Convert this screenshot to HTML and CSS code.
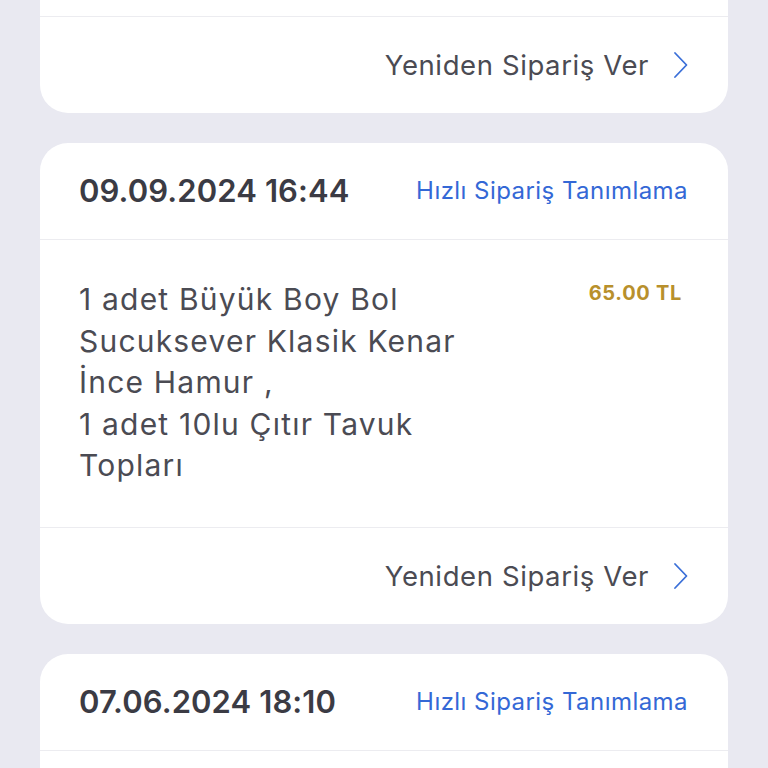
FILE: index.html
```html
<!DOCTYPE html>
<html lang="tr">
<head>
<meta charset="utf-8">
<link rel="stylesheet" href="styles.css">
</head>
<body>
<div class="list">
  <div class="card card-cut">
    <div class="tail"></div>
    <div class="footer">
      <span class="again">Yeniden Sipariş Ver</span>
      <svg class="chev" viewBox="0 0 20 30" width="20" height="30"><path d="M5 3 L16.5 15 L5 27" fill="none" stroke="#3a6fd8" stroke-width="1.8" stroke-linecap="round" stroke-linejoin="round"/></svg>
    </div>
  </div>

  <div class="card">
    <div class="header">
      <span class="date">09.09.2024 16:44</span>
      <span class="link">Hızlı Sipariş Tanımlama</span>
    </div>
    <div class="body">
      <div class="items">1 adet Büyük Boy Bol<br>Sucuksever Klasik Kenar<br>İnce Hamur ,<br>1 adet 10lu Çıtır Tavuk<br>Topları</div>
      <div class="price">65.00 TL</div>
    </div>
    <div class="footer">
      <span class="again">Yeniden Sipariş Ver</span>
      <svg class="chev" viewBox="0 0 20 30" width="20" height="30"><path d="M5 3 L16.5 15 L5 27" fill="none" stroke="#3a6fd8" stroke-width="1.8" stroke-linecap="round" stroke-linejoin="round"/></svg>
    </div>
  </div>

  <div class="card">
    <div class="header">
      <span class="date">07.06.2024 18:10</span>
      <span class="link">Hızlı Sipariş Tanımlama</span>
    </div>
    <div class="body body-cut"></div>
  </div>
</div>
</body>
</html>
```

FILE: styles.css
```css
html, body {
  margin: 0;
  padding: 0;
  background: #e9e9f1;
  font-family: "Inter", "Noto Sans", sans-serif;
  overflow: hidden;
}
.list {
  display: flex;
  flex-direction: column;
  gap: 30px;
  padding: 0 40px;
  height: 768px;
}
.card {
  background: #ffffff;
  border-radius: 28px;
  flex-shrink: 0;
}
.card-cut {
  border-radius: 0 0 28px 28px;
}
.tail {
  height: 16px;
  border-bottom: 1px solid #ececf0;
}
.header {
  height: 97px;
  box-sizing: border-box;
  border-bottom: 1px solid #ececf0;
  display: flex;
  align-items: center;
  justify-content: space-between;
  padding: 0 40px 2px 39px;
}
.date {
  font-size: 31px;
  font-weight: 600;
  color: #3b3b44;
  letter-spacing: 0.1px;
}
.link {
  font-size: 24px;
  color: #3468d6;
  letter-spacing: 0.45px;
}
.body {
  display: flex;
  justify-content: space-between;
  align-items: flex-start;
  height: 288px;
  box-sizing: border-box;
  padding: 39px 46px 0 39px;
  border-bottom: 1px solid #ececf0;
}
.items {
  font-size: 30px;
  line-height: 41.5px;
  color: #4b4b53;
  letter-spacing: 1.2px;
}
.price {
  font-size: 20px;
  font-weight: 700;
  color: #b8902c;
  line-height: 28px;
  letter-spacing: 0.7px;
}
.body-cut {
  height: 60px;
  border-bottom: none;
}
.footer {
  height: 96px;
  display: flex;
  align-items: center;
  justify-content: flex-end;
  gap: 21px;
  padding: 0 38px 0 40px;
}
.again {
  font-size: 27.5px;
  color: #4b4b53;
  letter-spacing: 0.6px;
}
.chev {
  display: block;
}
```
